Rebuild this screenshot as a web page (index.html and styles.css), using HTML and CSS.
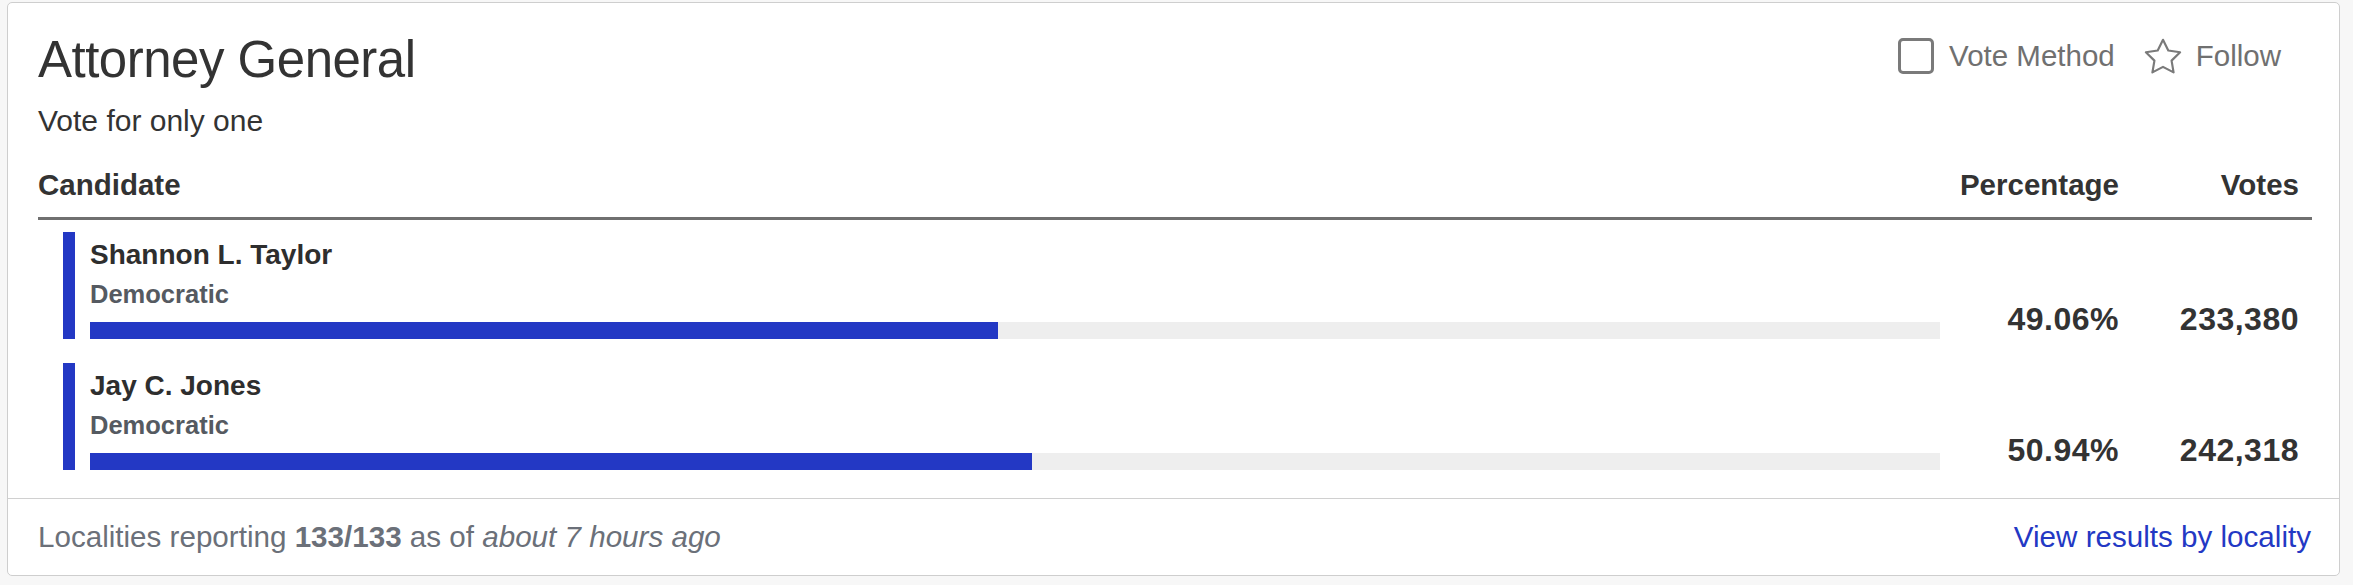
FILE: index.html
```html
<!DOCTYPE html>
<html lang="en">
<head>
    <meta charset="UTF-8">
    <meta name="viewport" content="width=device-width, initial-scale=1.0">
    <title>Attorney General - Results</title>
    <link rel="stylesheet" href="styles.css">
</head>
<body>
    <div class="race-card">
        <div class="race-body">
            <div class="race-header">
                <h2 class="race-title">Attorney General</h2>
                <div class="race-actions">
                    <label class="vote-method">
                        <span class="checkbox"></span>
                        Vote Method
                    </label>
                    <a class="follow" href="#">
                        <svg class="star" width="38" height="36" viewBox="1.5 1.5 21 20" fill="none" stroke="#7a7a7a" stroke-width="1.2" stroke-linejoin="round">
                            <path d="M12 2.5l2.94 5.96 6.58.96-4.76 4.64 1.12 6.55L12 17.52l-5.88 3.09 1.12-6.55L2.48 9.42l6.58-.96z"/>
                        </svg>
                        Follow
                    </a>
                </div>
            </div>
            <div class="race-subtitle">Vote for only one</div>

            <div class="results-head">
                <div>Candidate</div>
                <div class="num">Percentage</div>
                <div class="num">Votes</div>
            </div>

            <div class="results">
                <div class="result-row">
                    <div class="candidate">
                        <div class="candidate-inner">
                            <div class="candidate-name">Shannon L. Taylor</div>
                            <div class="candidate-party">Democratic</div>
                            <div class="bar-track"><div class="bar-fill" style="width: 49.06%"></div></div>
                        </div>
                    </div>
                    <div class="num value">49.06%</div>
                    <div class="num value">233,380</div>
                </div>
                <div class="result-row">
                    <div class="candidate">
                        <div class="candidate-inner">
                            <div class="candidate-name">Jay C. Jones</div>
                            <div class="candidate-party">Democratic</div>
                            <div class="bar-track"><div class="bar-fill" style="width: 50.94%"></div></div>
                        </div>
                    </div>
                    <div class="num value">50.94%</div>
                    <div class="num value">242,318</div>
                </div>
            </div>
        </div>

        <div class="race-footer">
            <div class="reporting">
                Localities reporting <strong>133/133</strong> as of <em>about 7 hours ago</em>
            </div>
            <a class="locality-link" href="#">View results by locality</a>
        </div>
    </div>
</body>
</html>
```

FILE: styles.css
```css
body {
    margin: 0;
    padding: 2px 13px 0 7px;
    background-color: #f7f7f7;
    font-family: "Liberation Sans", Arial, Helvetica, sans-serif;
    color: #333;
}

.race-card {
    background-color: white;
    border: 1px solid #cecece;
    border-radius: 5px;
}

.race-body {
    padding: 27px 27px 28px 30px;
}

.race-header {
    display: flex;
    justify-content: space-between;
    align-items: center;
}

.race-title {
    margin: 0;
    font-size: 51px;
    font-weight: normal;
    letter-spacing: -0.5px;
    line-height: 60px;
    color: #333;
}

.race-actions {
    display: flex;
    align-items: center;
    padding-right: 31px;
    margin-bottom: 8px;
    font-size: 29.5px;
    color: #707070;
}

.vote-method {
    display: flex;
    align-items: center;
    gap: 15px;
    margin-right: 29px;
    cursor: pointer;
}

.checkbox {
    width: 36px;
    height: 36px;
    border: 3px solid #7a7a7a;
    border-radius: 5px;
    box-sizing: border-box;
}

.follow {
    display: flex;
    align-items: center;
    gap: 14px;
    color: #707070;
    text-decoration: none;
}

.race-subtitle {
    margin-top: 13px;
    font-size: 30px;
    line-height: 36px;
    color: #333;
}

.results-head,
.result-row {
    display: grid;
    grid-template-columns: 1fr 179px 180px;
    padding-right: 13px;
}

.results-head {
    margin-top: 28px;
    padding-bottom: 14px;
    border-bottom: 3px solid #707070;
    font-size: 29.5px;
    font-weight: bold;
    line-height: 36px;
}

.num {
    text-align: right;
}

.results {
    display: flex;
    flex-direction: column;
    gap: 24px;
    padding-top: 12px;
}

.candidate {
    padding-left: 25px;
}

.candidate-inner {
    border-left: 12px solid #2338c4;
    padding-left: 15px;
}

.candidate-name {
    font-size: 28px;
    font-weight: bold;
    line-height: 46px;
    color: #2e2e2e;
}

.candidate-party {
    font-size: 25.5px;
    font-weight: bold;
    line-height: 32px;
    color: #555a61;
}

.bar-track {
    margin-top: 12px;
    height: 17px;
    background-color: #eeeeee;
}

.bar-fill {
    height: 100%;
    background-color: #2338c4;
}

.value {
    align-self: end;
    padding-bottom: 2px;
    font-size: 32px;
    font-weight: bold;
    letter-spacing: 0.5px;
    line-height: 36px;
    color: #333;
}

.race-footer {
    display: flex;
    justify-content: space-between;
    align-items: center;
    padding: 20px 28px 20px 30px;
    border-top: 1px solid #d0d0d0;
    font-size: 29.6px;
    line-height: 36px;
}

.reporting {
    color: #6b7079;
}

.locality-link {
    color: #2338c4;
    text-decoration: none;
}

.locality-link:hover {
    text-decoration: underline;
}
```
